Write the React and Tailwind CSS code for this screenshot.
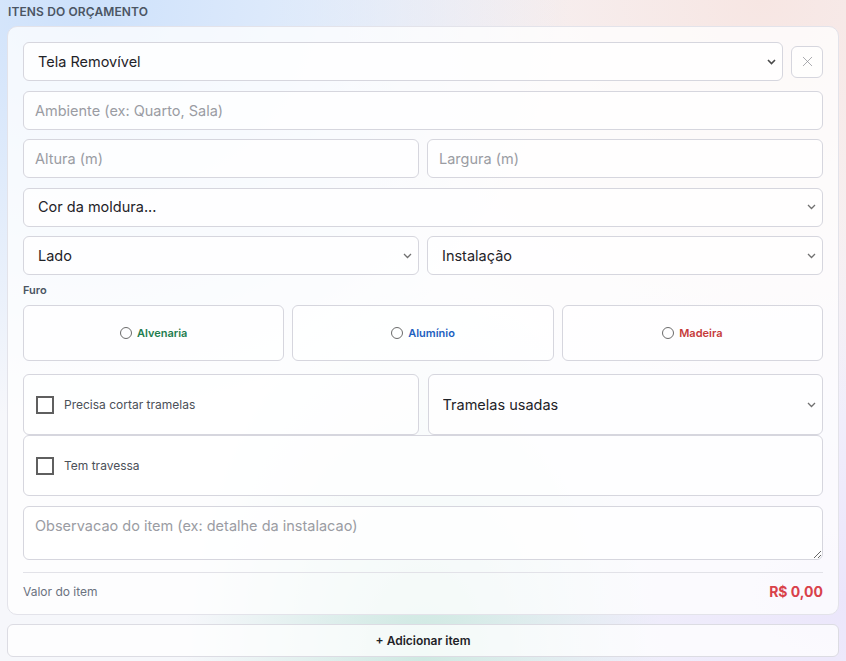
import { X } from 'lucide-react';

const inputBase =
  'w-full h-[39px] rounded-md border border-[#d6d6de] bg-white/80 px-[11px] text-[14.5px] text-[#1f2328] placeholder:text-[#9a9ca3] outline-none';

function Select({ children, className = '', h = 'h-[39px]', dark = false }) {
  return (
    <div className={`relative ${className}`}>
      <select
        className={`${inputBase} ${h} appearance-none pl-[14px] pr-6`}
        defaultValue=""
      >
        {children}
      </select>
      <svg
        className="pointer-events-none absolute right-[7px] top-1/2 -translate-y-1/2"
        width="9"
        height="6"
        viewBox="0 0 9 6"
        fill="none"
      >
        <path
          d="M1 1l3.5 3.5L8 1"
          stroke={dark ? '#4a4a4a' : '#707070'}
          strokeWidth={dark ? 1.6 : 1.3}
        />
      </svg>
    </div>
  );
}

function Radio({ label, color }) {
  return (
    <label className="flex h-[56px] items-center justify-center gap-[5px] rounded-md border border-[#d6d6de] bg-white/70">
      <span className="h-[12px] w-[12px] rounded-full border border-[#6b6b6b]" />
      <span className={`text-[11px] font-semibold ${color}`}>{label}</span>
    </label>
  );
}

function Check({ label }) {
  return (
    <label className="flex h-[61px] items-center gap-[10px] rounded-md border border-[#d6d6de] bg-white/70 px-[12px]">
      <span className="h-[18px] w-[18px] border-2 border-[#5f5f5f] bg-white" />
      <span className="text-[12px] text-[#4b5058]">{label}</span>
    </label>
  );
}

export default function App() {
  return (
    <div
      className="min-h-screen w-full px-[7px] pt-[4px] pb-[4px] bg-[radial-gradient(ellipse_at_10%_0%,#cde1fb_0%,transparent_45%),radial-gradient(ellipse_at_90%_0%,#f7e6e3_0%,transparent_45%),radial-gradient(ellipse_at_50%_100%,#cfe9e2_0%,transparent_40%),radial-gradient(ellipse_at_100%_90%,#ebe6fb_0%,transparent_45%),linear-gradient(#f6f7fb,#f6f7fb)]"
      style={{ fontFamily: 'Inter, "Noto Sans", sans-serif' }}
    >
      <h2 className="pl-[1px] text-[12px] font-semibold uppercase tracking-[0.01em] text-[#4b5563] leading-[16px]">
        Itens do orçamento
      </h2>

      <div className="mt-[6px] rounded-[10px] border border-[#e3e3ea] bg-white/75 px-[15px] pt-[15px] pb-[12px]">
        <div className="flex flex-col gap-[9.5px]">
          <div className="flex items-center gap-[8px]">
            <Select className="flex-1" dark>
              <option value="">Tela Removível</option>
            </Select>
            <button className="flex h-[32px] w-[32px] shrink-0 items-center justify-center rounded-md border border-[#d6d6de] bg-white/70 text-[#8a8a90]">
              <X size={17} strokeWidth={1} />
            </button>
          </div>

          <input className={inputBase} placeholder="Ambiente (ex: Quarto, Sala)" />

          <div className="grid grid-cols-2 gap-[8px]">
            <input className={inputBase} placeholder="Altura (m)" />
            <input className={inputBase} placeholder="Largura (m)" />
          </div>

          <Select>
            <option value="">Cor da moldura...</option>
          </Select>

          <div className="grid grid-cols-2 gap-[8px]">
            <Select>
              <option value="">Lado</option>
            </Select>
            <Select>
              <option value="">Instalação</option>
            </Select>
          </div>
        </div>

        <p className="mt-[8px] text-[11px] font-semibold text-[#4b5563] leading-[14px]">Furo</p>
        <div className="mt-[8px] grid grid-cols-3 gap-[8px]">
          <Radio label="Alvenaria" color="text-[#1e7d4f]" />
          <Radio label="Alumínio" color="text-[#1f5fbf]" />
          <Radio label="Madeira" color="text-[#c53a3a]" />
        </div>

        <div className="mt-[13px] grid grid-cols-2 gap-x-[9px]">
          <Check label="Precisa cortar tramelas" />
          <Select h="h-[61px]">
            <option value="">Tramelas usadas</option>
          </Select>
          <div className="col-span-2">
            <Check label="Tem travessa" />
          </div>
        </div>

        <textarea
          className="mt-[10px] block h-[54px] w-full rounded-md border border-[#d6d6de] bg-white/80 px-[11px] py-[8px] text-[14.5px] placeholder:text-[#9a9ca3] outline-none"
          placeholder="Observacao do item (ex: detalhe da instalacao)"
        />

        <div className="mt-[12px] flex items-center justify-between border-t border-[#e2e2e8] pt-[8px]">
          <span className="text-[12px] text-[#6b7280]">Valor do item</span>
          <span className="text-[14px] font-bold text-[#d9414a]">R$ 0,00</span>
        </div>
      </div>

      <button className="mt-[9px] flex h-[33px] w-full items-center justify-center rounded-md border border-[#dcdce3] bg-white/75 text-[12px] font-semibold text-[#1f2328]">
        + Adicionar item
      </button>
    </div>
  );
}
